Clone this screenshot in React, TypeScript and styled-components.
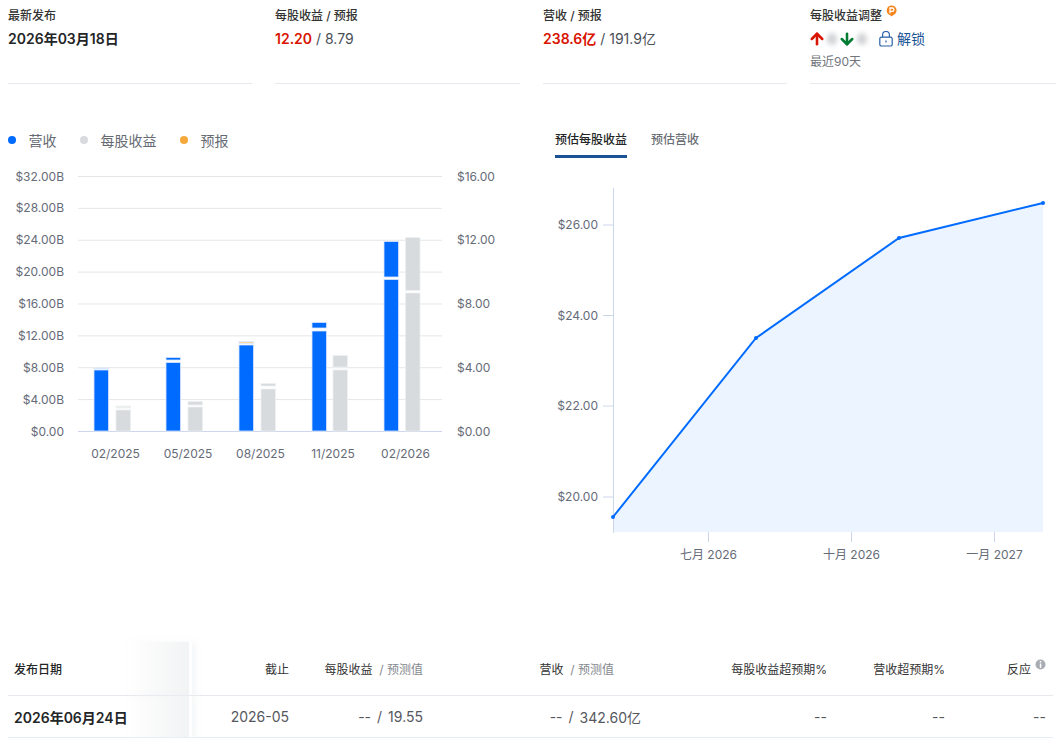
import React from 'react';
import styled, { createGlobalStyle } from 'styled-components';
import { ArrowUp, ArrowDown } from 'lucide-react';

const GlobalStyle = createGlobalStyle`
  html, body {
    margin: 0;
    padding: 0;
    background: #fff;
    font-family: Inter, "Noto Sans CJK SC", "Liberation Sans", sans-serif;
    color: #232526;
  }
  body { height: 738px; overflow: hidden; }
`;

const Page = styled.div`
  width: 1064px;
  height: 738px;
  overflow: hidden;
`;

// --- Stats ---
const StatsRow = styled.div`
  display: grid;
  grid-template-columns: 244px 245px 244px 246px;
  column-gap: 23px;
  padding: 0 8px;
  height: 84px;
`;

const Stat = styled.div`
  display: flex;
  flex-direction: column;
  border-bottom: 1px solid #e6e9ee;
  padding-top: 8px;
  box-sizing: border-box;
`;

const StatLabel = styled.div`
  position: relative;
  font-size: 12px;
  line-height: 16px;
  font-weight: 500;
  color: #333;
`;

const ProBadge = styled.svg`
  position: absolute;
  left: 76px;
  top: -3px;
`;

const StatValue = styled.div`
  margin-top: 6px;
  display: flex;
  align-items: center;
  height: 18px;
  font-size: 14px;
  line-height: 18px;
  color: #4a4f57;
`;

const Strong = styled.span<{ $red?: boolean }>`
  font-weight: 600;
  color: ${(p) => (p.$red ? '#d91400' : '#232526')};
`;

const Slash = styled.span`
  white-space: pre;
`;

const TrendArrows = styled.span`
  display: inline-flex;
  align-items: center;
  margin-left: -2px;
`;

const Blur = styled.span`
  width: 10px;
  height: 12px;
  margin: 0 1px;
  border-radius: 50%;
  background: #cfd1d4;
  filter: blur(2.5px);
`;

const Unlock = styled.span`
  display: inline-flex;
  align-items: center;
  gap: 4px;
  margin-left: 11px;
  color: #1a5296;
  font-size: 14px;
`;

const StatNote = styled.div`
  margin-top: 6px;
  font-size: 12px;
  line-height: 16px;
  color: #73777d;
`;

// --- Charts ---
const Charts = styled.div`
  display: flex;
  margin-top: 46px;
`;

const LeftColumn = styled.div`
  width: 530px;
`;

const RightColumn = styled.div`
  width: 534px;
`;

const Legend = styled.div`
  display: flex;
  align-items: center;
  height: 20px;
  padding-left: 8px;
  margin-bottom: 10px;
`;

const LegendDot = styled.span<{ $color: string }>`
  width: 8px;
  height: 8px;
  border-radius: 50%;
  background: ${(p) => p.$color};
  margin-right: 12.5px;
`;

const LegendText = styled.span`
  font-size: 14px;
  color: #666b73;
  margin-right: 23.5px;
`;

const Tabs = styled.div`
  display: flex;
  gap: 24px;
  padding-left: 25px;
  height: 28px;
  margin-bottom: 12px;
`;

const Tab = styled.div<{ $active?: boolean }>`
  padding-top: 1px;
  font-size: 12px;
  line-height: 18px;
  font-weight: 500;
  color: ${(p) => (p.$active ? '#232526' : '#6a6e75')};
  border-bottom: ${(p) => (p.$active ? '3px solid #1a5296' : '3px solid transparent')};
  box-sizing: border-box;
`;

const ChartSvg = styled.svg`
  display: block;
  font-family: Inter, "Noto Sans CJK SC", "Liberation Sans", sans-serif;
  font-size: 12px;
  fill: #666b78;
`;

// --- Table ---
const Table = styled.div`
  margin: 62px 11px 0 8px;
`;

const TableRow = styled.div<{ $head?: boolean }>`
  position: relative;
  display: grid;
  grid-template-columns: 182px 99px 134px 218px 186px 118px 101px;
  align-items: center;
  height: ${(p) => (p.$head ? '53px' : '41px')};
  border-bottom: 1px solid ${(p) => (p.$head ? '#e6e9ee' : '#e6ecf6')};
  font-size: ${(p) => (p.$head ? '12px' : '14px')};
  color: ${(p) => (p.$head ? '#333' : '#55585e')};
`;

const Cell = styled.div<{ $pull?: number }>`
  display: flex;
  justify-content: flex-end;
  align-items: center;
  white-space: pre;
  padding-right: ${(p) => p.$pull ?? 0}px;
`;

const DateCell = styled.div<{ $bold?: boolean }>`
  position: relative;
  align-self: stretch;
  display: flex;
  align-items: center;
  padding-left: 6px;
  font-weight: ${(p) => (p.$bold ? 600 : 500)};
  color: #232526;
  white-space: nowrap;
  &::after {
    content: '';
    position: absolute;
    top: 0;
    bottom: 0;
    left: 120px;
    width: 61px;
    background: linear-gradient(90deg, rgba(240, 241, 243, 0), #f2f3f4);
    border-right: 3px solid #fff;
    box-shadow: 4px 0 4px rgba(240, 241, 243, 0.5);
  }
`;

const Muted = styled.span`
  color: #85888e;
`;

const Sep = styled.span`
  margin: 0 6px;
`;

const HeadInfo = styled.svg`
  position: absolute;
  right: 7px;
  top: 17px;
`;

const revenueTicks = ['$32.00B', '$28.00B', '$24.00B', '$20.00B', '$16.00B', '$12.00B', '$8.00B', '$4.00B', '$0.00'];
const epsTicks = ['$16.00', '', '$12.00', '', '$8.00', '', '$4.00', '', '$0.00'];
const quarters = ['02/2025', '05/2025', '08/2025', '11/2025', '02/2026'];

const BLUE = { fill: '#006bff', edge: '#d6e6ff' };
const GREY = { fill: '#d8dbde', edge: '#eef0f1' };

type BarSet = { x: number; tone: typeof BLUE; top: [number, number]; topColor: string; main: number };
const bars: BarSet[] = [
  { x: 94, tone: BLUE, top: [368, 369], topColor: '#e6f0ff', main: 370 },
  { x: 116, tone: GREY, top: [406, 408], topColor: '#eceef0', main: 410 },
  { x: 166, tone: BLUE, top: [357.5, 360], topColor: '#006bff', main: 362.5 },
  { x: 188, tone: GREY, top: [401.5, 405], topColor: '#d8dbde', main: 407 },
  { x: 239, tone: BLUE, top: [341.5, 343.5], topColor: '#f8d9a6', main: 345 },
  { x: 261, tone: GREY, top: [383.5, 386], topColor: '#d8dbde', main: 389 },
  { x: 312, tone: BLUE, top: [322.5, 328], topColor: '#006bff', main: 331 },
  { x: 333, tone: GREY, top: [355.5, 367], topColor: '#d8dbde', main: 370 },
  { x: 384, tone: BLUE, top: [241.5, 277], topColor: '#006bff', main: 279.5 },
  { x: 405.5, tone: GREY, top: [237.5, 290.5], topColor: '#d8dbde', main: 293 },
];

const linePoints: [number, number][] = [[613, 517], [756, 338], [899, 238], [1043, 203]];

const BarChart: React.FC = () => (
  <ChartSvg width={530} height={310} viewBox="0 160 530 310">
    {revenueTicks.map((label, i) => {
      const y = 176.5 + i * 31.87;
      const textY = i === 8 ? y + 5 : y + 4;
      return (
        <g key={label}>
          <line x1={78} x2={442} y1={y} y2={y} stroke={i === 8 ? '#ccd6eb' : '#e6e6e6'} />
          <text x={64} y={textY} textAnchor="end">{label}</text>
          <text x={457} y={textY}>{epsTicks[i]}</text>
        </g>
      );
    })}
    {bars.map((b) => (
      <g key={b.x} stroke={b.tone.edge} strokeWidth={0.8}>
        <rect x={b.x} y={b.top[0]} width={14.5} height={b.top[1] - b.top[0]} fill={b.topColor} />
        <rect x={b.x} y={b.main} width={14.5} height={431 - b.main} fill={b.tone.fill} />
      </g>
    ))}
    {quarters.map((q, i) => (
      <text key={q} x={115.5 + i * 72.5} y={457.5} textAnchor="middle">{q}</text>
    ))}
  </ChartSvg>
);

const LineChart: React.FC = () => {
  const line = linePoints.map(([x, y]) => `${x},${y}`).join(' ');
  return (
    <ChartSvg width={534} height={410} viewBox="530 170 534 410">
      <polygon points={`${line} 1043,532 613,532`} fill="#ebf4ff" />
      <line x1={613.5} x2={613.5} y1={188} y2={533} stroke="#ccd6eb" />
      {[['$26.00', 225], ['$24.00', 315.5], ['$22.00', 406], ['$20.00', 497]].map(([label, y]) => (
        <g key={label}>
          <line x1={603} x2={613} y1={y} y2={y} stroke="#ccd6eb" />
          <text x={598} y={Number(y) + 4} textAnchor="end">{label}</text>
        </g>
      ))}
      {[['七月 2026', 708.5], ['十月 2026', 851.5], ['一月 2027', 994.5]].map(([label, x]) => (
        <g key={label}>
          <line x1={x} x2={x} y1={532} y2={542} stroke="#ccd6eb" />
          <text x={x} y={559} textAnchor="middle">{label}</text>
        </g>
      ))}
      <polyline points={line} fill="none" stroke="#006bff" strokeWidth={2} />
      {linePoints.map(([x, y]) => (
        <circle key={x} cx={x} cy={y} r={2} fill="#006bff" />
      ))}
    </ChartSvg>
  );
};

const App: React.FC = () => (
  <Page>
    <GlobalStyle />
    <StatsRow>
      <Stat>
        <StatLabel>最新发布</StatLabel>
        <StatValue><Strong>2026年03月18日</Strong></StatValue>
      </Stat>
      <Stat>
        <StatLabel>每股收益 / 预报</StatLabel>
        <StatValue><Strong $red>12.20</Strong><Slash> / 8.79</Slash></StatValue>
      </Stat>
      <Stat>
        <StatLabel>营收 / 预报</StatLabel>
        <StatValue><Strong $red>238.6亿</Strong><Slash> / 191.9亿</Slash></StatValue>
      </Stat>
      <Stat>
        <StatLabel>
          每股收益调整
          <ProBadge width="11" height="12" viewBox="0 0 11 12">
            <path d="M5.5 0.5a5 5 0 0 1 2.2 9.5L5 11.5l-.6-1.2A5 5 0 0 1 5.5.5z" fill="#f5861f" />
            <path d="M4 8.2V3h2.2a1.7 1.7 0 0 1 0 3.4H4" fill="none" stroke="#fff" strokeWidth="1.3" />
          </ProBadge>
        </StatLabel>
        <StatValue>
          <TrendArrows>
            <ArrowUp size={18} strokeWidth={3.4} color="#d91400" />
            <Blur />
            <ArrowDown size={18} strokeWidth={3.4} color="#007c32" />
            <Blur />
          </TrendArrows>
          <Unlock>
            <svg width="14" height="16" viewBox="0 0 14 16" fill="none" stroke="#2a62a8" strokeWidth="1.2">
              <rect x="0.8" y="6.2" width="12.4" height="8.8" rx="1.6" />
              <path d="M3.6 6.2V3.9a3.4 3.4 0 0 1 6.8 0v2.3" />
              <path d="M7 9.6v2" />
            </svg>
            解锁
          </Unlock>
        </StatValue>
        <StatNote>最近90天</StatNote>
      </Stat>
    </StatsRow>

    <Charts>
      <LeftColumn>
        <Legend>
          <LegendDot $color="#006bff" />
          <LegendText>营收</LegendText>
          <LegendDot $color="#d8dbde" />
          <LegendText>每股收益</LegendText>
          <LegendDot $color="#f5a93c" />
          <LegendText>预报</LegendText>
        </Legend>
        <BarChart />
      </LeftColumn>
      <RightColumn>
        <Tabs>
          <Tab $active>预估每股收益</Tab>
          <Tab>预估营收</Tab>
        </Tabs>
        <LineChart />
      </RightColumn>
    </Charts>

    <Table>
      <TableRow $head>
        <DateCell>发布日期</DateCell>
        <Cell>截止</Cell>
        <Cell>每股收益 <Muted> / 预测值</Muted></Cell>
        <Cell $pull={27}>营收 <Muted> / 预测值</Muted></Cell>
        <Cell>每股收益超预期%</Cell>
        <Cell>营收超预期%</Cell>
        <Cell $pull={15}>反应</Cell>
        <HeadInfo width="11" height="11" viewBox="0 0 11 11">
          <circle cx="5.5" cy="5.5" r="5" fill="#a9adb3" />
          <rect x="4.8" y="2" width="1.5" height="1.5" fill="#fff" />
          <rect x="4.8" y="4.5" width="1.5" height="4.3" fill="#fff" />
        </HeadInfo>
      </TableRow>
      <TableRow>
        <DateCell $bold>2026年06月24日</DateCell>
        <Cell>2026-05</Cell>
        <Cell>--<Sep>/</Sep>19.55</Cell>
        <Cell>--<Sep>/</Sep>342.60亿</Cell>
        <Cell>--</Cell>
        <Cell>--</Cell>
        <Cell>--</Cell>
      </TableRow>
    </Table>
  </Page>
);

export default App;
